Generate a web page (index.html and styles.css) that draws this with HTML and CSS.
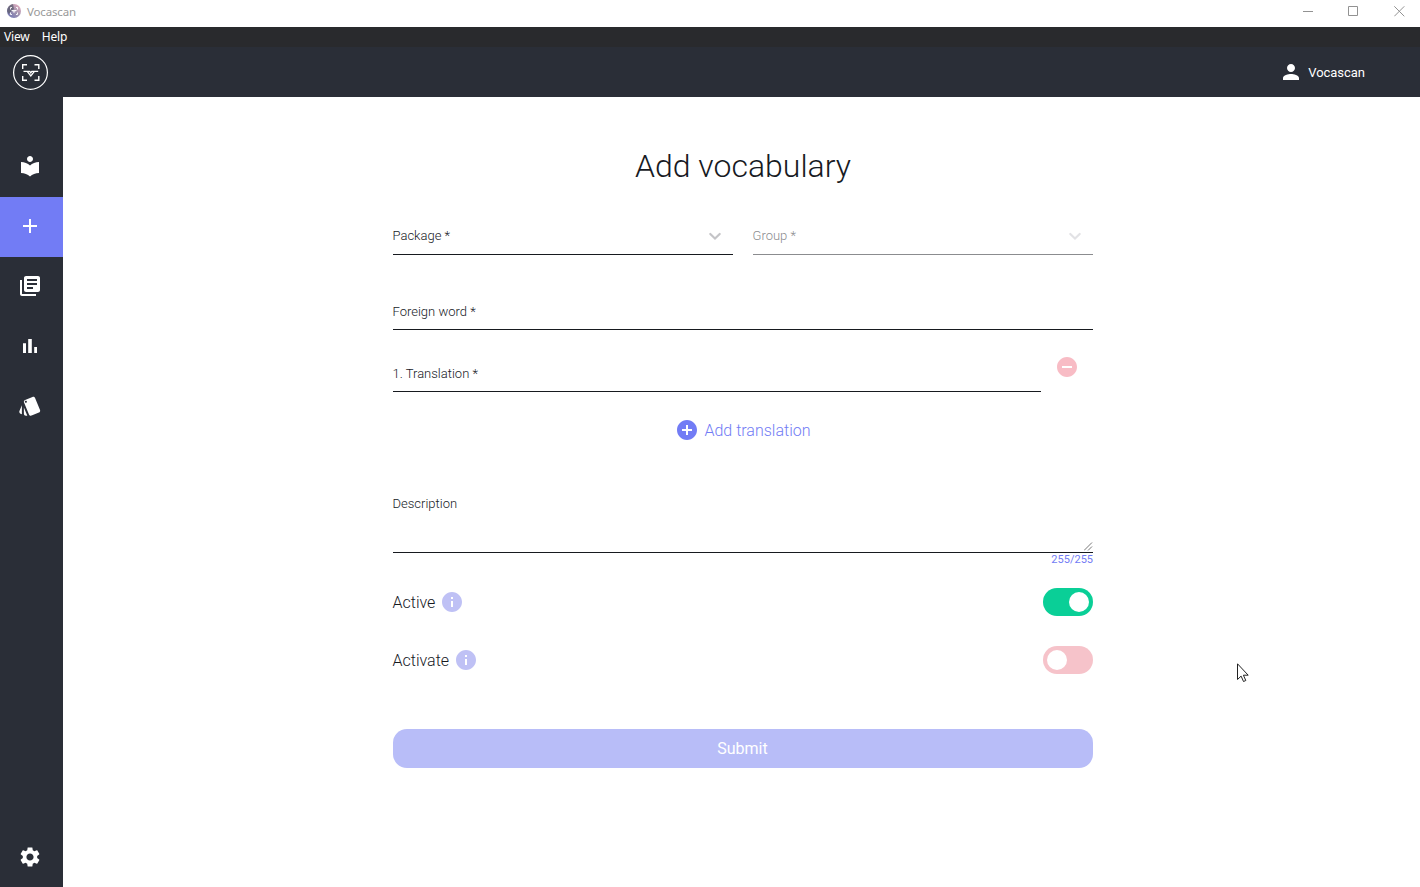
FILE: index.html
```html
<!DOCTYPE html>
<html lang="en">
<head>
<meta charset="utf-8">
<title>Vocascan</title>
<link rel="stylesheet" href="styles.css">
</head>
<body>
<div class="window">
  <div class="titlebar">
    <svg class="app-icon" width="14" height="14" viewBox="0 0 14 14">
      <defs><linearGradient id="appGradient" x1="1" y1="0" x2="0.2" y2="1"><stop offset="0" stop-color="#f4b4c4"/><stop offset=".5" stop-color="#a596b0"/><stop offset="1" stop-color="#7378b4"/></linearGradient></defs>
      <circle cx="7" cy="7" r="7" fill="url(#appGradient)"/>
      <path d="M0 7A7 7 0 0 1 6 .1L7 5 1.500 10Z" fill="#535565" opacity=".65"/>
      <path d="M3.500 5.500v-2H5M9 3.500h1.500v2M3.500 8.500v2H5M9 10.500h1.500v-2M4.500 6.500h5M5.500 6.500L7 8.500l1.500-2" fill="none" stroke="#fff" stroke-width=".9"/>
    </svg>
    <span class="app-name">Vocascan</span>
    <div class="window-controls">
      <svg width="11" height="11" viewBox="0 0 11 11"><path d="M1 5.500h10" /></svg>
      <svg width="11" height="11" viewBox="0 0 11 11"><path d="M.5.500h9v9h-9z" /></svg>
      <svg width="11" height="11" viewBox="0 0 11 11"><path d="M.3.300l10 10M10.300.300l-10 10" /></svg>
    </div>
  </div>
  <div class="menubar"><span>View</span><span>Help</span></div>
  <header class="header">
    <svg class="logo" width="36" height="36" viewBox="0 0 36 36">
      <circle cx="17.500" cy="17.500" r="16.900" stroke-width="1.200"/>
      <path d="M9.700 14v-4.300H14M21.500 9.700h4.300V14M9.700 21v4.300H14M21.500 25.300h4.300V21" stroke-width="1.400"/>
      <path d="M10.500 16.300h3.700l3.600 4.700 3.600-4.700h3.800M14.500 16.300h2.300l1 1.500 1-1.500h2.300" stroke-width="1.300"/>
    </svg>
    <div class="user">
      <svg width="24" height="24" viewBox="0 0 24 24"><path d="M12 12c2.210 0 4-1.790 4-4s-1.790-4-4-4-4 1.790-4 4 1.790 4 4 4zm0 2c-2.670 0-8 1.340-8 4v2h16v-2c0-2.660-5.330-4-8-4z"/></svg>
      <span>Vocascan</span>
    </div>
  </header>
  <div class="body">
    <nav class="sidebar">
      <a class="nav-item"><svg viewBox="0 0 24 24"><path d="M12 11.550C9.640 9.350 6.480 8 3 8v11c3.480 0 6.640 1.350 9 3.550 2.360-2.190 5.520-3.550 9-3.550V8c-3.480 0-6.640 1.350-9 3.550zM12 8c1.660 0 3-1.340 3-3s-1.340-3-3-3-3 1.340-3 3 1.340 3 3 3z"/></svg></a>
      <a class="nav-item active"><svg viewBox="0 0 24 24"><path d="M19 13h-6v6h-2v-6H5v-2h6V5h2v6h6v2z"/></svg></a>
      <a class="nav-item"><svg viewBox="0 0 24 24"><path d="M4 6H2v14c0 1.100.9 2 2 2h14v-2H4V6zm16-4H8c-1.100 0-2 .9-2 2v12c0 1.100.9 2 2 2h12c1.100 0 2-.9 2-2V4c0-1.100-.9-2-2-2zm-1 9H9V9h10v2zm-4 4H9v-2h6v2zm4-8H9V5h10v2z"/></svg></a>
      <a class="nav-item"><svg viewBox="0 0 24 24"><path d="M5 9.200h3V19H5zM10.200 5h3.600v14h-3.600zM16.200 13H19v6h-2.800z"/></svg></a>
      <a class="nav-item"><svg viewBox="0 0 24 24"><path d="M2.530 19.650l1.340.56v-9.030l-2.430 5.860c-.41 1.020.08 2.190 1.090 2.610zm19.500-3.700L17.070 3.980c-.31-.75-1.040-1.210-1.810-1.230-.26 0-.53.040-.79.150L7.100 5.950c-.75.310-1.210 1.030-1.230 1.800-.01.270.040.540.150.8l4.960 11.970c.31.760 1.050 1.220 1.830 1.230.26 0 .52-.05.770-.15l7.360-3.050c1.020-.42 1.510-1.590 1.090-2.600zM7.880 8.750c-.55 0-1-.45-1-1s.45-1 1-1 1 .45 1 1-.45 1-1 1zm-2 11c0 1.100.9 2 2 2h1.450l-3.450-8.340v6.340z"/></svg></a>
      <a class="nav-item settings"><svg viewBox="0 0 24 24"><path d="M19.140 12.940c.04-.3.060-.61.060-.94 0-.32-.02-.64-.07-.94l2.030-1.580c.18-.14.230-.41.120-.61l-1.920-3.320c-.12-.22-.37-.29-.59-.22l-2.390.96c-.5-.38-1.030-.7-1.620-.94l-.36-2.540c-.04-.24-.24-.41-.48-.41h-3.840c-.24 0-.43.170-.47.410l-.36 2.540c-.59.240-1.130.57-1.620.94l-2.390-.96c-.22-.08-.47 0-.59.220L2.740 8.870c-.12.210-.08.470.12.610l2.030 1.580c-.05.300-.09.630-.09.940s.02.640.07.940l-2.030 1.580c-.18.140-.23.410-.12.610l1.920 3.320c.12.220.37.290.59.220l2.390-.96c.5.380 1.030.7 1.620.94l.36 2.540c.05.240.24.410.48.410h3.840c.24 0 .44-.17.470-.41l.36-2.540c.59-.24 1.130-.56 1.620-.94l2.390.96c.22.080.47 0 .59-.22l1.920-3.320c.12-.22.070-.47-.12-.61l-2.010-1.580zM12 15.600c-1.980 0-3.600-1.620-3.600-3.600s1.620-3.600 3.600-3.600 3.600 1.620 3.600 3.600-1.620 3.600-3.600 3.600z"/></svg></a>
    </nav>
    <main class="content">
      <form class="form">
        <h1>Add vocabulary</h1>
        <div class="selects">
          <div class="field"><span>Package *</span><svg class="chevron" width="20" height="20" viewBox="0 0 20 20"><path d="M5.300 8l4.700 4.500L14.700 8"/></svg></div>
          <div class="field disabled"><span>Group *</span><svg class="chevron" width="20" height="20" viewBox="0 0 20 20"><path d="M5.300 8l4.700 4.500L14.700 8"/></svg></div>
        </div>
        <div class="field foreign"><span>Foreign word *</span></div>
        <div class="translation">
          <div class="field"><span>1. Translation *</span></div>
          <svg class="remove" width="24" height="24" viewBox="0 0 24 24"><path d="M12 2C6.480 2 2 6.480 2 12s4.480 10 10 10 10-4.480 10-10S17.520 2 12 2zm5 11H7v-2h10v2z"/></svg>
        </div>
        <div class="add">
          <svg width="24" height="24" viewBox="0 0 24 24"><path d="M12 2C6.480 2 2 6.480 2 12s4.480 10 10 10 10-4.480 10-10S17.520 2 12 2zm5 11h-4v4h-2v-4H7v-2h4V7h2v4h4v2z"/></svg>
          <span>Add translation</span>
        </div>
        <div class="description"><span>Description</span><svg class="grip" width="9" height="9" viewBox="0 0 9 9"><path d="M0 8.500l8-8M4 8.500l4-4"/></svg></div>
        <div class="counter">255/255</div>
        <div class="option">
          <span>Active</span>
          <svg class="info" width="24" height="24" viewBox="0 0 24 24"><path d="M12 2C6.480 2 2 6.480 2 12s4.480 10 10 10 10-4.480 10-10S17.520 2 12 2zm1 15h-2v-6h2v6zm0-8h-2V7h2v2z"/></svg>
          <div class="switch on"><i></i></div>
        </div>
        <div class="option">
          <span>Activate</span>
          <svg class="info" width="24" height="24" viewBox="0 0 24 24"><path d="M12 2C6.480 2 2 6.480 2 12s4.480 10 10 10 10-4.480 10-10S17.520 2 12 2zm1 15h-2v-6h2v6zm0-8h-2V7h2v2z"/></svg>
          <div class="switch"><i></i></div>
        </div>
        <button class="submit" type="button">Submit</button>
      </form>
    </main>
  </div>
  <svg class="cursor" width="12" height="20" viewBox="0 0 12 20"><path d="M.5.800v15.700l3.600-3.400 2.400 5.400 2.300-1-2.400-5.300h4.800z"/></svg>
</div>
</body>
</html>
```
FILE: styles.css
```css
* { box-sizing: border-box; }
body { margin: 0; font-family: Roboto, sans-serif; color: #171a1f; background: #fff; }
svg { display: block; flex: none; }
.window { position: relative; display: flex; flex-direction: column; width: 1420px; height: 887px; overflow: hidden; }

.titlebar { display: flex; align-items: flex-start; height: 27px; padding: 4px 15px 0 7px; font: 12px/16px "Noto Sans", sans-serif; color: #999; }
.app-name { margin-left: 6px; font-size: 11.500px; letter-spacing: -.15px; }
.window-controls { display: flex; gap: 35px; margin: 2px 0 0 auto; }
.window-controls svg { fill: none; stroke: #929292; stroke-width: 1; }

.menubar { display: flex; gap: 12px; height: 20px; padding-left: 4px; background: #292a2d; color: #fff; font: 12px/20px "Noto Sans", sans-serif; letter-spacing: -.15px; }

.header { display: flex; align-items: center; justify-content: space-between; height: 50px; padding: 0 55px 0 13px; background: #2a2e37; }
.logo { margin-top: 2px; fill: none; stroke: #fff; }
.user { display: flex; align-items: center; gap: 5px; color: #fff; font-size: 13px; letter-spacing: -.03px; }
.user svg { fill: #fff; }

.body { display: flex; flex: 1; }
.sidebar { display: flex; flex-direction: column; width: 63px; padding-top: 40px; background: #2a2e37; }
.nav-item { display: flex; align-items: center; height: 60px; padding: 0 0 2px 18px; }
.nav-item svg { width: 24px; height: 24px; fill: #fff; }
.nav-item.active { background: #727cf5; }
.nav-item.settings { margin-top: auto; padding-bottom: 0; }

.content { flex: 1; display: flex; justify-content: center; padding-left: 3px; }
.form { width: 700px; padding-top: 49px; font-weight: 300; }
h1 { margin: 0; font-size: 32px; line-height: 40px; font-weight: 300; text-align: center; }
.field { display: flex; justify-content: space-between; align-items: center; height: 38px; border-bottom: 1px solid #171a1f; font-size: 13px; }
.field span, .description span, .option span { margin-left: -.5px; }
.selects { display: grid; grid-template-columns: 1fr 1fr; gap: 20px; margin-top: 31px; }
.chevron { margin-right: 8px; fill: none; stroke: #c4c4c7; stroke-width: 2.200; stroke-linecap: round; }
.disabled { color: #8b8c8f; border-color: #8b8c8f; }
.disabled .chevron { stroke: #e2e2e5; }
.foreign { margin-top: 37px; padding-top: 2px; }
.translation { display: flex; margin-top: 24px; }
.translation .field { width: 648px; padding-top: 2px; }
.remove { margin-left: 14px; margin-top: 1px; fill: #f8bcc5; }
.add { display: flex; align-items: center; justify-content: center; gap: 5px; height: 24px; margin-top: 26px; color: #727cf5; font-size: 16px; }
.add svg { fill: #727cf5; }
.description { display: flex; justify-content: space-between; height: 57px; margin-top: 54px; border-bottom: 1px solid #171a1f; font-size: 13px; line-height: 16px; }
.grip { align-self: flex-end; margin-bottom: 1px; fill: none; stroke: #555; stroke-width: .8; }
.counter { height: 13px; color: #727cf5; font-size: 11px; line-height: 13px; text-align: right; font-weight: 400; }
.option { display: flex; align-items: center; height: 28px; margin-top: 22px; font-size: 16px; }
.option + .option { margin-top: 30px; }
.info { margin-left: 5px; fill: #bfc1f5; }
.switch { display: flex; justify-content: flex-start; width: 50px; height: 28px; margin-left: auto; padding: 4px; border-radius: 14px; background: #f6c3ca; }
.switch.on { justify-content: flex-end; background: #0acf97; }
.switch i { width: 20px; height: 20px; border-radius: 50%; background: #fff; }
.submit { display: block; width: 100%; height: 39px; margin-top: 55px; padding: 0 1px 0 0; border: 0; border-radius: 14px; background: #b8bdf8; color: #fff; font: 400 16px/39px Roboto, sans-serif; }
.cursor { position: absolute; left: 1237px; top: 663px; fill: #fff; stroke: #222; stroke-width: 1; }
```
